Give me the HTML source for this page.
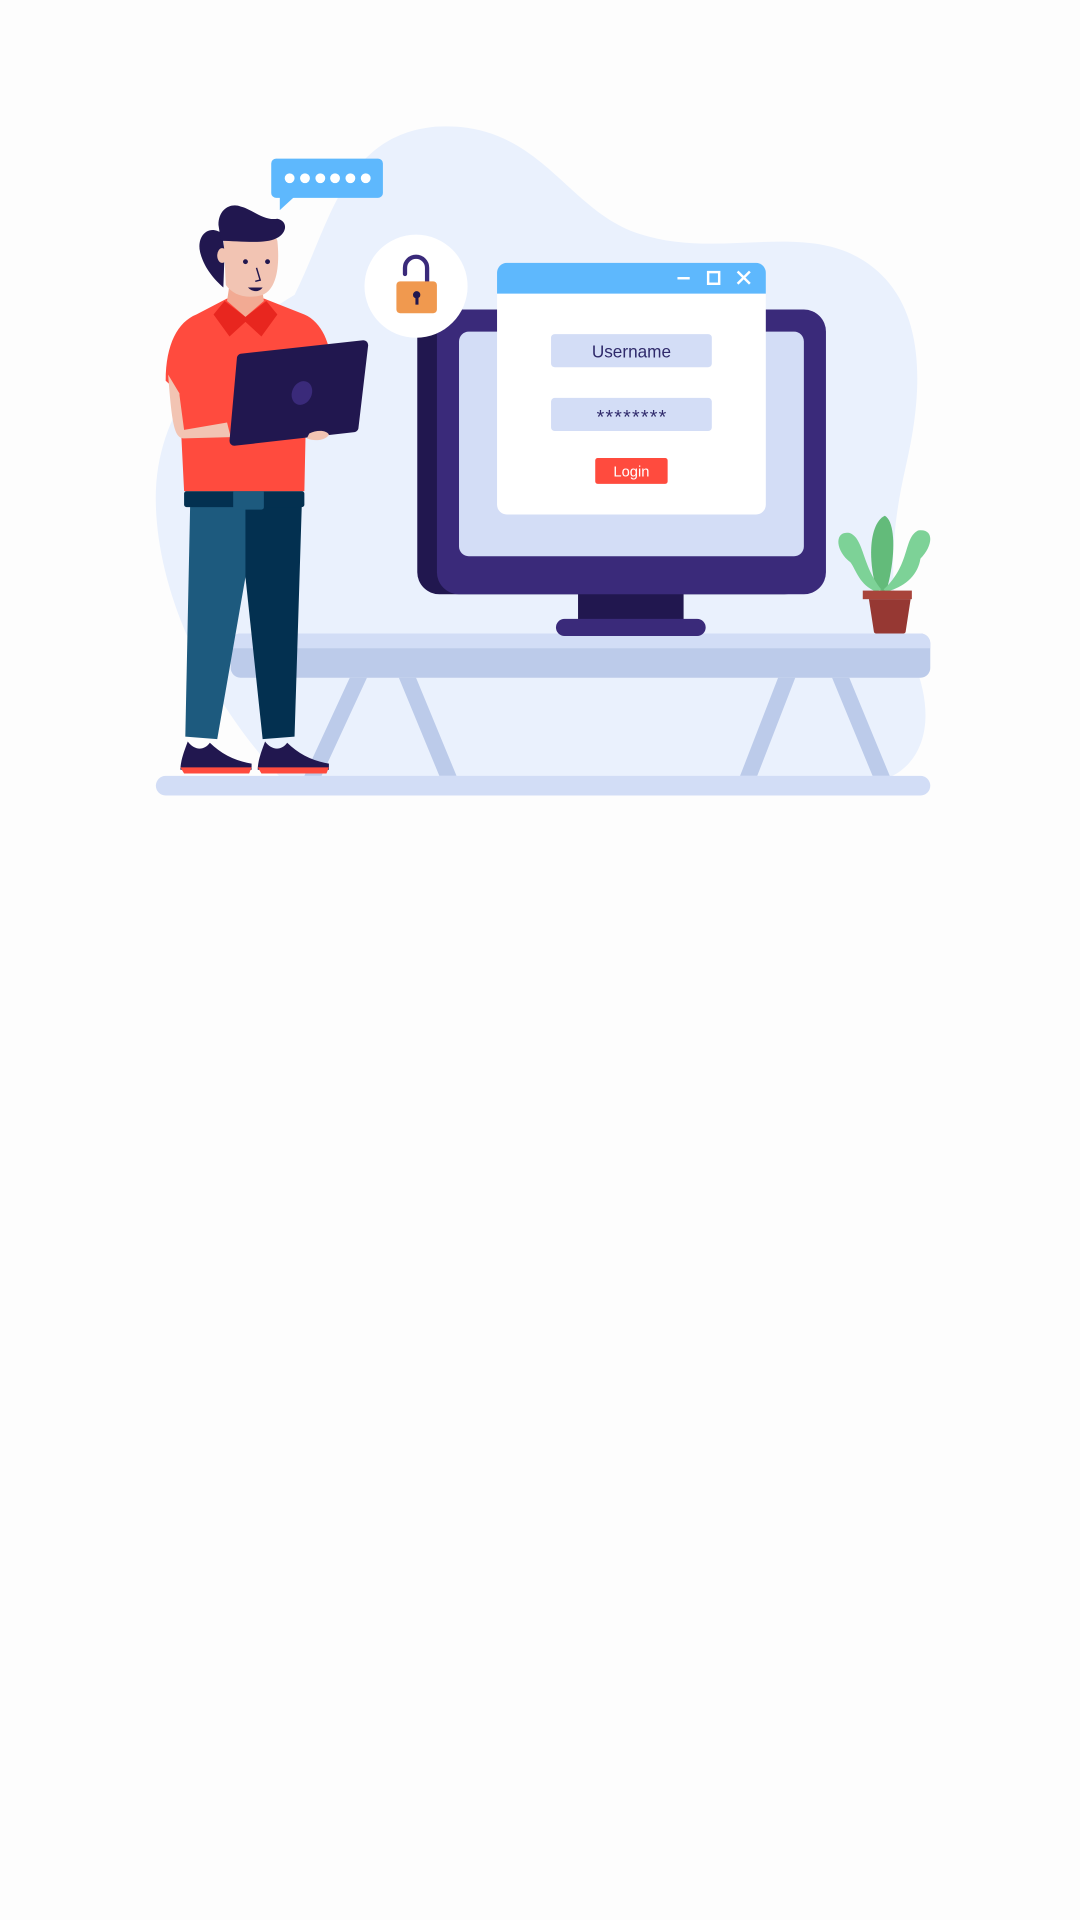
<!DOCTYPE html>
<html><head><meta charset="utf-8"><style>
html,body{margin:0;padding:0;background:#fdfdfd;}
svg{display:block;}
</style></head><body>
<svg width="1080" height="1920" viewBox="0 0 880 1564" xmlns="http://www.w3.org/2000/svg">
<rect width="880" height="1564" fill="#fdfdfd"/>
<path d="M240,240 C270,180 280,110 355,103 C440,98 460,170 520,190 C580,210 640,185 690,205 C760,235 752,320 738,380 C722,450 725,500 745,540 C765,590 750,625 720,635 L230,635 C160,560 125,470 127,400 C130,320 190,270 240,240 Z" fill="#eaf1fd"/>
<g fill="#bccbea">
<polygon points="285,552 299,552 262,632 248,632"/>
<polygon points="325,552 339,552 372,632 358,632"/>
<polygon points="634,552 648,552 617,632 603,632"/>
<polygon points="678,552 692,552 725,632 711,632"/>
</g>
<rect x="188" y="516" width="570" height="36" rx="8" fill="#bccbea"/>
<path d="M196,516 H750 a8,8 0 0 1 8,8 V528 H188 V524 a8,8 0 0 1 8,-8 Z" fill="#d2ddf6"/>
<rect x="127" y="632" width="631" height="16" rx="8" fill="#d2ddf6"/>
<rect x="471" y="482" width="86" height="24" fill="#21174f"/>
<rect x="453" y="504" width="122" height="14" rx="7" fill="#3a2a7a"/>
<rect x="340" y="252" width="317" height="232" rx="18" fill="#21174f"/>
<rect x="356" y="252" width="317" height="232" rx="18" fill="#3a2a7a"/>
<rect x="374" y="270" width="281" height="183" rx="8" fill="#d3ddf6"/>
<rect x="405" y="214" width="219" height="205" rx="8" fill="#ffffff"/>
<path d="M413,214 H616 a8,8 0 0 1 8,8 V239 H405 V222 a8,8 0 0 1 8,-8 Z" fill="#5eb8fd"/>
<line x1="552" y1="226.5" x2="562" y2="226.5" stroke="#fff" stroke-width="2"/>
<rect x="577" y="221.5" width="9" height="9.5" fill="none" stroke="#fff" stroke-width="2"/>
<path d="M601,221 L611,231 M611,221 L601,231" stroke="#fff" stroke-width="2"/>
<rect x="449" y="272" width="131" height="27" rx="3" fill="#d3ddf6"/>
<text x="514.5" y="291" text-anchor="middle" font-family="Liberation Sans, sans-serif" font-size="14" fill="#2f2a6b">Username</text>
<rect x="449" y="324" width="131" height="27" rx="3" fill="#d3ddf6"/>
<text x="515" y="345" text-anchor="middle" font-family="Liberation Sans, sans-serif" font-size="16" letter-spacing="1" fill="#2f2a6b">********</text>
<rect x="485" y="373" width="59" height="21" rx="2" fill="#ff4b3e"/>
<text x="514.5" y="388" text-anchor="middle" font-family="Liberation Sans, sans-serif" font-size="12" fill="#ffffff">Login</text>
<circle cx="339" cy="233" r="42" fill="#ffffff"/>
<path d="M330,223 V218 a9,9 0 0 1 18,0 V229" fill="none" stroke="#3a2a7a" stroke-width="3.5" stroke-linecap="round"/>
<rect x="323" y="229" width="33" height="26" rx="3" fill="#f0994f"/>
<circle cx="339.5" cy="240" r="3" fill="#21174f"/>
<rect x="338.5" y="241" width="2.5" height="7" fill="#21174f"/>
<rect x="221" y="129" width="91" height="32" rx="4" fill="#5eb8fd"/>
<polygon points="228,160 240,160 228,171" fill="#5eb8fd"/>
<g fill="#fff"><circle cx="236" cy="145" r="4"/><circle cx="248.5" cy="145" r="4"/><circle cx="261" cy="145" r="4"/><circle cx="273" cy="145" r="4"/><circle cx="285.5" cy="145" r="4"/><circle cx="298" cy="145" r="4"/></g>
<path d="M714,480 C706,450 710,425 721,420 C730,425 730,455 722,482 Z" fill="#63bb7a"/>
<path d="M714,482 C700,476 698,465 693,458 C680,448 680,432 692,434 C704,438 702,460 718,480 Z" fill="#7dd297"/>
<path d="M722,482 C738,478 748,468 750,455 C760,445 762,430 748,432 C736,438 742,460 720,480 Z" fill="#7dd297"/>
<path d="M708,488 L742,488 L738,514 a2,2 0 0 1 -2,2 L714,516 a2,2 0 0 1 -2,-2 Z" fill="#963833"/>
<rect x="703" y="481" width="40" height="7" fill="#a8443b"/>
<path d="M155,408 L205,408 L200,470 L177,602 L151,600 Z" fill="#1d5a7e"/>
<path d="M200,408 L246,408 L240,600 L214,602 L200,470 Z" fill="#033050"/>
<rect x="150" y="400" width="98" height="13" rx="2" fill="#033050"/>
<rect x="190" y="399" width="25" height="16" rx="2" fill="#1d5a7e"/>
<path d="M153,604 C158,611 166,612 171,605 C180,614 192,620 205,622 L205,627 L147,627 C147,620 150,612 153,604 Z" fill="#21174f"/>
<path d="M147,625 L205,625 L203,630 L150,630 Z" fill="#ff4b3e"/>
<path d="M216,604 C221,611 229,612 234,605 C243,614 255,620 268,622 L268,627 L210,627 C210,620 213,612 216,604 Z" fill="#21174f"/>
<path d="M210,625 L268,625 L266,630 L213,630 Z" fill="#ff4b3e"/>
<path d="M185,243 L215,243 L248,256 C262,262 270,280 270,300 L250,305 L248,400 L150,400 L146,320 L135,310 C135,280 145,262 160,256 Z" fill="#ff4b3e"/>
<path d="M183,245 L200,258 L217,245 L226,256 L213,274 L200,262 L187,274 L174,256 Z" fill="#e8261f"/>
<path d="M188,225 L212,225 L215,245 L200,258 L185,245 Z" fill="#f2aa93"/>
<path d="M182,190 C190,185 222,182 226,196 C228,215 226,235 214,240 C200,244 190,240 184,232 Z" fill="#f2c4b3"/>
<path d="M181,190 C170,182 160,192 163,205 C166,218 175,228 182,234 L183,205 Z" fill="#21174f"/>
<path d="M178,183 C178,170 188,165 196,168 C205,170 215,180 226,178 C235,180 234,190 225,194 C215,199 195,196 180,196 Z" fill="#21174f"/>
<ellipse cx="181" cy="208" rx="4" ry="6" fill="#f2c4b3"/>
<circle cx="200" cy="213" r="2" fill="#21174f"/><circle cx="218" cy="213" r="2" fill="#21174f"/>
<path d="M209,218 L212,228 L208,229" fill="none" stroke="#21174f" stroke-width="1.2"/>
<path d="M202,234 C206,238 211,238 214,234 Z" fill="#21174f"/>
<path d="M137,305 L146,320 L150,350 L185,344 L188,356 L150,357 C142,357 140,345 137,305 Z" fill="#f2c4b3"/>
<path d="M196,288 L296,277 a4,4 0 0 1 4,4 L292,349 a4,4 0 0 1 -4,3 L191,363 a4,4 0 0 1 -4,-4 L193,292 a4,4 0 0 1 3,-4 Z" fill="#21174f"/>
<ellipse cx="246" cy="320" rx="8" ry="10" transform="rotate(25 246 320)" fill="#3a2a7a"/>
<path d="M252,353 C258,350 266,350 268,354 C266,358 257,360 250,357 Z" fill="#f2c4b3"/>
</svg>
</body></html>
